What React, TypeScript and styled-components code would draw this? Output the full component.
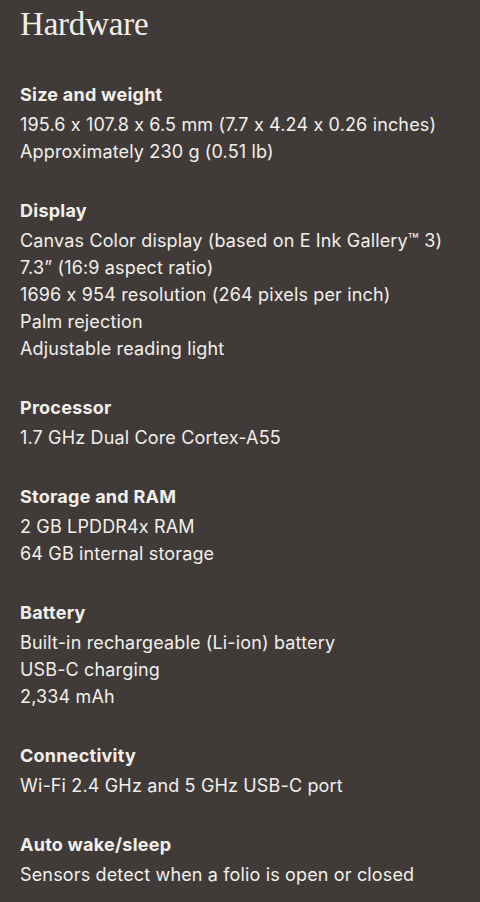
import React from "react";
import styled, { createGlobalStyle } from "styled-components";

const Global = createGlobalStyle`
  html, body { margin: 0; padding: 0; background: #403b38; }
  body { -webkit-font-smoothing: antialiased; }
`;

const Page = styled.main`
  box-sizing: border-box;
  width: 480px;
  min-height: 902px;
  background: #403b38;
  color: #f2efeb;
  padding: 6px 20px 0 20px;
  font-family: Inter, "Liberation Sans", sans-serif;
  font-feature-settings: "calt" 0;
`;

const Title = styled.h1`
  margin: 0 0 39px 0;
  font-family: "Liberation Serif", serif;
  font-weight: 400;
  font-size: 33px;
  line-height: 36px;
  letter-spacing: -0.2px;
`;

const Sections = styled.div`
  display: flex;
  flex-direction: column;
  gap: 32px;
`;

const Section = styled.section`
  display: flex;
  flex-direction: column;
`;

const Heading = styled.h2`
  margin: 0 0 3px 0;
  font-size: 18px;
  font-weight: 700;
  line-height: 27px;
  letter-spacing: 0.25px;
`;

const Line = styled.p`
  margin: 0;
  font-size: 18px;
  font-weight: 400;
  line-height: 27px;
  letter-spacing: 0.15px;
`;

const specs: { title: string; lines: string[] }[] = [
  {
    title: "Size and weight",
    lines: [
      "195.6 x 107.8 x 6.5 mm (7.7 x 4.24 x 0.26 inches)",
      "Approximately 230 g (0.51 lb)",
    ],
  },
  {
    title: "Display",
    lines: [
      "Canvas Color display (based on E Ink Gallery™ 3)",
      "7.3” (16:9 aspect ratio)",
      "1696 x 954 resolution (264 pixels per inch)",
      "Palm rejection",
      "Adjustable reading light",
    ],
  },
  { title: "Processor", lines: ["1.7 GHz Dual Core Cortex-A55"] },
  {
    title: "Storage and RAM",
    lines: ["2 GB LPDDR4x RAM", "64 GB internal storage"],
  },
  {
    title: "Battery",
    lines: [
      "Built-in rechargeable (Li-ion) battery",
      "USB-C charging",
      "2,334 mAh",
    ],
  },
  { title: "Connectivity", lines: ["Wi-Fi 2.4 GHz and 5 GHz USB-C port"] },
  {
    title: "Auto wake/sleep",
    lines: ["Sensors detect when a folio is open or closed"],
  },
];

export default function App() {
  return (
    <>
      <Global />
      <Page>
        <Title>Hardware</Title>
        <Sections>
          {specs.map((s) => (
            <Section key={s.title}>
              <Heading>{s.title}</Heading>
              {s.lines.map((l) => (
                <Line key={l}>{l}</Line>
              ))}
            </Section>
          ))}
        </Sections>
      </Page>
    </>
  );
}
